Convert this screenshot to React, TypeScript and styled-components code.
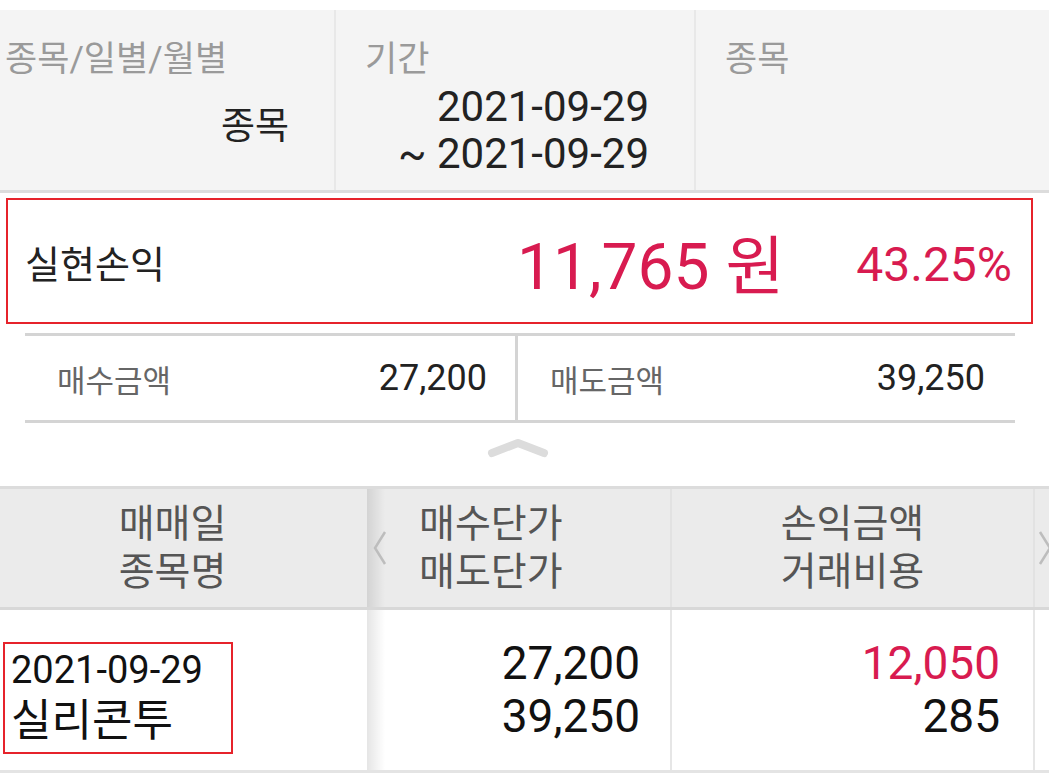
import styled, { createGlobalStyle } from 'styled-components';

const GlobalStyle = createGlobalStyle`
  body {
    margin: 0;
    background: #fff;
    font-family: "Roboto", "Noto Sans CJK KR", sans-serif;
    color: #222;
  }
`;

const RED = '#d81b50';

export default function App() {
  return (
    <Page>
      <GlobalStyle />
      <FilterBar>
        <FilterCell padLeft={5}>
          <FilterLabel>종목/일별/월별</FilterLabel>
          <FilterValue gap={27}>종목</FilterValue>
        </FilterCell>
        <FilterCell padLeft={29}>
          <FilterLabel>기간</FilterLabel>
          <DateValue>
            <div>2021-09-29</div>
            <div>~ 2021-09-29</div>
          </DateValue>
        </FilterCell>
        <FilterCell padLeft={29} last>
          <FilterLabel>종목</FilterLabel>
        </FilterCell>
      </FilterBar>

      <SummaryBox>
        <SummaryTitle>실현손익</SummaryTitle>
        <ProfitAmount>11,765 원</ProfitAmount>
        <ProfitRate>43.25%</ProfitRate>
      </SummaryBox>

      <AmountRow>
        <AmountCell>
          <AmountLabel>매수금액</AmountLabel>
          <AmountValue>27,200</AmountValue>
        </AmountCell>
        <AmountCell last>
          <AmountLabel>매도금액</AmountLabel>
          <AmountValue>39,250</AmountValue>
        </AmountCell>
      </AmountRow>

      <Handle>
        <svg width="64" height="24" viewBox="0 0 64 24">
          <path d="M6 16 L32 6 L58 16" fill="none" stroke="#dcdcdc" strokeWidth="8" strokeLinecap="round" strokeLinejoin="round" />
        </svg>
      </Handle>

      <Table>
        <HeadRow>
          <HeadCell align="center" padRight={22}>
            <div>매매일</div>
            <div>종목명</div>
          </HeadCell>
          <HeadCell align="left" padLeft={52} shadow>
            <ScrollArrow side="left">
              <svg width="16" height="36" viewBox="0 0 16 36">
                <path d="M13 2 L3 18 L13 34" fill="none" stroke="#bdbdbd" strokeWidth="2.5" />
              </svg>
            </ScrollArrow>
            <div>매수단가</div>
            <div>매도단가</div>
          </HeadCell>
          <HeadCell align="center" divider>
            <div>손익금액</div>
            <div>거래비용</div>
          </HeadCell>
          <HeadCell align="center" divider>
            <ScrollArrow side="right">
              <svg width="16" height="36" viewBox="0 0 16 36">
                <path d="M3 2 L13 18 L3 34" fill="none" stroke="#bdbdbd" strokeWidth="2.5" />
              </svg>
            </ScrollArrow>
          </HeadCell>
        </HeadRow>
        <DataRow>
          <DataCell>
            <StockBox>
              <TradeDate>2021-09-29</TradeDate>
              <StockName>실리콘투</StockName>
            </StockBox>
          </DataCell>
          <DataCell numeric padRight={30} shadow>
            <Num>27,200</Num>
            <Num>39,250</Num>
          </DataCell>
          <DataCell numeric padRight={33} divider>
            <Num color={RED}>12,050</Num>
            <Num>285</Num>
          </DataCell>
          <DataCell divider />
        </DataRow>
      </Table>
    </Page>
  );
}

const Page = styled.div`
  width: 1049px;
  padding-top: 10px;
  overflow: hidden;
`;

const FilterBar = styled.div`
  display: grid;
  grid-template-columns: 336px 360px 1fr;
  height: 180px;
  background: #f4f4f4;
  border-bottom: 3px solid #dcdcdc;
`;

const FilterCell = styled.div<{ padLeft: number; last?: boolean }>`
  display: flex;
  flex-direction: column;
  padding: 30px 45px 0 ${p => p.padLeft}px;
  border-right: ${p => (p.last ? 'none' : '2px solid #e8e8e8')};
`;

const FilterLabel = styled.div`
  font-size: 35px;
  line-height: 40px;
  color: #9a9a9a;
  white-space: nowrap;
`;

const FilterValue = styled.div<{ gap: number }>`
  margin-top: ${p => p.gap}px;
  font-size: 37px;
  line-height: 40px;
  text-align: right;
  color: #222;
`;

const DateValue = styled.div`
  margin-top: 3px;
  font-size: 42px;
  line-height: 47px;
  text-align: right;
  color: #222;
`;

const SummaryBox = styled.div`
  display: flex;
  align-items: center;
  height: 122px;
  margin: 5px 16px 0 6px;
  padding: 0 19px 0 17px;
  border: 2px solid #e6232b;
`;

const SummaryTitle = styled.div`
  font-size: 38px;
  color: #222;
  flex: 1;
`;

const ProfitAmount = styled.div`
  font-size: 64px;
  color: ${RED};
  margin-right: 72px;
`;

const ProfitRate = styled.div`
  font-size: 48px;
  color: ${RED};
  padding-top: 6px;
`;

const AmountRow = styled.div`
  display: grid;
  grid-template-columns: 493px 1fr;
  height: 84px;
  margin: 9px 34px 0 25px;
  border-top: 3px solid #d4d4d4;
  border-bottom: 3px solid #d4d4d4;
`;

const AmountCell = styled.div<{ last?: boolean }>`
  display: flex;
  align-items: center;
  justify-content: space-between;
  padding: 0 ${p => (p.last ? 30 : 28)}px 0 32px;
  border-right: ${p => (p.last ? 'none' : '3px solid #d4d4d4')};
`;

const AmountLabel = styled.div`
  font-size: 31px;
  color: #666;
`;

const AmountValue = styled.div`
  font-size: 36px;
  color: #222;
`;

const Handle = styled.div`
  display: flex;
  justify-content: center;
  height: 63px;
  padding-top: 14px;
  padding-right: 14px;
  box-sizing: border-box;
`;

const Table = styled.div`
  border-top: 3px solid #dcdcdc;
`;

const columns = '367px 303px 363px 1fr';

const HeadRow = styled.div`
  display: grid;
  grid-template-columns: ${columns};
  height: 118px;
  background: #ebebeb;
  border-bottom: 3px solid #d8d8d8;
`;

const ShadowEdge = `
  &::before {
    content: '';
    position: absolute;
    left: 0;
    top: 0;
    bottom: 0;
    width: 18px;
    background: linear-gradient(to right, rgba(0, 0, 0, 0.1), rgba(0, 0, 0, 0));
  }
`;

const HeadCell = styled.div<{ align: 'left' | 'center'; padLeft?: number; padRight?: number; shadow?: boolean; divider?: boolean }>`
  position: relative;
  display: flex;
  flex-direction: column;
  justify-content: center;
  align-items: ${p => (p.align === 'center' ? 'center' : 'flex-start')};
  padding: 0 ${p => p.padRight ?? 0}px 0 ${p => p.padLeft ?? 0}px;
  font-size: 39px;
  line-height: 48px;
  color: #555;
  border-left: ${p => (p.divider ? '2px solid #e2e2e2' : 'none')};
  ${p => (p.shadow ? ShadowEdge : '')}
`;

const ScrollArrow = styled.div<{ side: 'left' | 'right' }>`
  position: absolute;
  top: 41px;
  ${p => (p.side === 'left' ? 'left: 5px;' : 'left: 2px;')}
  display: flex;
`;

const DataRow = styled.div`
  display: grid;
  grid-template-columns: ${columns};
  height: 160px;
  border-bottom: 3px solid #e4e4e4;
`;

const DataCell = styled.div<{ numeric?: boolean; padRight?: number; shadow?: boolean; divider?: boolean }>`
  position: relative;
  display: flex;
  flex-direction: column;
  justify-content: center;
  align-items: ${p => (p.numeric ? 'flex-end' : 'flex-start')};
  padding-right: ${p => p.padRight ?? 0}px;
  border-left: ${p => (p.divider ? '2px solid #e6e6e6' : 'none')};
  ${p => (p.shadow ? ShadowEdge : '')}
`;

const StockBox = styled.div`
  margin-left: 3px;
  margin-top: 16px;
  width: 230px;
  height: 112px;
  border: 2px solid #e6232b;
  padding: 3px 0 0 6px;
  box-sizing: border-box;
`;

const TradeDate = styled.div`
  font-size: 38px;
  line-height: 46px;
  color: #111;
`;

const StockName = styled.div`
  font-size: 44px;
  line-height: 56px;
  color: #111;
`;

const Num = styled.div<{ color?: string }>`
  font-size: 46px;
  line-height: 53px;
  color: ${p => p.color ?? '#111'};
`;
